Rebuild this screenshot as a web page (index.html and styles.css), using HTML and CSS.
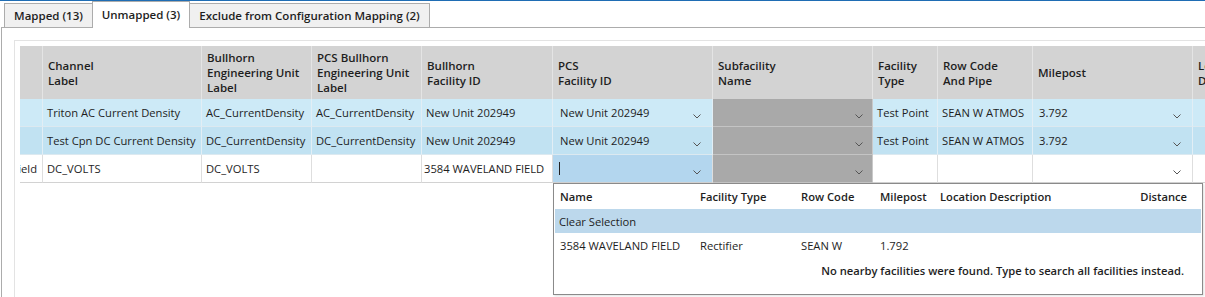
FILE: index.html
```html
<!DOCTYPE html>
<html lang="en">

<head>
    <meta charset="UTF-8">
    <title>Channel Mapping - Unmapped</title>
    <link rel="stylesheet" href="styles.css">
</head>

<body>
    <div class="topline"></div>

    <div class="tabs">
        <div class="tab tab-mapped">Mapped (13)</div>
        <div class="tab tab-unmapped active">Unmapped (3)</div>
        <div class="tab tab-exclude">Exclude from Configuration Mapping (2)</div>
    </div>

    <div class="panel">
        <div class="box">
            <div class="grid">
                <div class="row head">
                    <div class="cell"></div>
                    <div class="cell">Channel<br>Label</div>
                    <div class="cell">Bullhorn<br>Engineering Unit<br>Label</div>
                    <div class="cell">PCS Bullhorn<br>Engineering Unit<br>Label</div>
                    <div class="cell">Bullhorn<br>Facility ID</div>
                    <div class="cell">PCS<br>Facility ID</div>
                    <div class="cell">Subfacility<br>Name</div>
                    <div class="cell">Facility<br>Type</div>
                    <div class="cell">Row Code<br>And Pipe</div>
                    <div class="cell">Milepost</div>
                    <div class="cell">Location<br>Description</div>
                </div>

                <div class="row odd">
                    <div class="cell"></div>
                    <div class="cell">Triton AC Current Density</div>
                    <div class="cell">AC_CurrentDensity</div>
                    <div class="cell">AC_CurrentDensity</div>
                    <div class="cell">New Unit 202949</div>
                    <div class="cell combo"><span>New Unit 202949</span><svg class="chev" width="8" height="5" viewBox="0 0 8 5"><path d="M0.5 0.5 L4 4 L7.5 0.5" /></svg></div>
                    <div class="cell combo disabled"><span></span><svg class="chev" width="8" height="5" viewBox="0 0 8 5"><path d="M0.5 0.5 L4 4 L7.5 0.5" /></svg></div>
                    <div class="cell">Test Point</div>
                    <div class="cell">SEAN W ATMOS</div>
                    <div class="cell combo mp"><span>3.792</span><svg class="chev" width="8" height="5" viewBox="0 0 8 5"><path d="M0.5 0.5 L4 4 L7.5 0.5" /></svg></div>
                    <div class="cell"></div>
                </div>

                <div class="row even">
                    <div class="cell"></div>
                    <div class="cell">Test Cpn DC Current Density</div>
                    <div class="cell">DC_CurrentDensity</div>
                    <div class="cell">DC_CurrentDensity</div>
                    <div class="cell">New Unit 202949</div>
                    <div class="cell combo"><span>New Unit 202949</span><svg class="chev" width="8" height="5" viewBox="0 0 8 5"><path d="M0.5 0.5 L4 4 L7.5 0.5" /></svg></div>
                    <div class="cell combo disabled"><span></span><svg class="chev" width="8" height="5" viewBox="0 0 8 5"><path d="M0.5 0.5 L4 4 L7.5 0.5" /></svg></div>
                    <div class="cell">Test Point</div>
                    <div class="cell">SEAN W ATMOS</div>
                    <div class="cell combo mp"><span>3.792</span><svg class="chev" width="8" height="5" viewBox="0 0 8 5"><path d="M0.5 0.5 L4 4 L7.5 0.5" /></svg></div>
                    <div class="cell"></div>
                </div>

                <div class="row plain">
                    <div class="cell rowhead"><span>3584 Waveland Field</span></div>
                    <div class="cell">DC_VOLTS</div>
                    <div class="cell">DC_VOLTS</div>
                    <div class="cell"></div>
                    <div class="cell tight">3584 WAVELAND FIELD</div>
                    <div class="cell combo editing"><span class="caret"></span><svg class="chev" width="8" height="5" viewBox="0 0 8 5"><path d="M0.5 0.5 L4 4 L7.5 0.5" /></svg></div>
                    <div class="cell combo disabled"><span></span><svg class="chev" width="8" height="5" viewBox="0 0 8 5"><path d="M0.5 0.5 L4 4 L7.5 0.5" /></svg></div>
                    <div class="cell"></div>
                    <div class="cell"></div>
                    <div class="cell combo mp"><span></span><svg class="chev" width="8" height="5" viewBox="0 0 8 5"><path d="M0.5 0.5 L4 4 L7.5 0.5" /></svg></div>
                    <div class="cell"></div>
                </div>
            </div>

            <!-- facility picker popup for the PCS Facility ID editor -->
            <div class="dropdown">
                <div class="dd-row dd-head">
                    <div>Name</div>
                    <div>Facility Type</div>
                    <div>Row Code</div>
                    <div>Milepost</div>
                    <div>Location Description</div>
                    <div class="dist">Distance</div>
                </div>
                <div class="dd-row selected">
                    <div class="clear">Clear Selection</div>
                </div>
                <div class="dd-row">
                    <div>3584 WAVELAND FIELD</div>
                    <div>Rectifier</div>
                    <div>SEAN W</div>
                    <div>1.792</div>
                    <div></div>
                    <div class="dist"></div>
                </div>
                <div class="dd-note">No nearby facilities were found. Type to search all facilities instead.</div>
            </div>
        </div>
    </div>
</body>

</html>
```

FILE: styles.css
```css
* {
    box-sizing: border-box;
}

body {
    margin: 0;
    height: 297px;
    overflow: hidden;
    background: #fff;
    color: #1e1e1e;
    font-family: "Open Sans", "Noto Sans", sans-serif;
    font-size: 11.2px;
}

.topline {
    height: 1px;
    background: #1f6db4;
}

/* tab strip */
.tabs {
    display: flex;
    align-items: flex-end;
    height: 26px;
    padding-left: 4px;
    position: relative;
    z-index: 1;
}

.tab {
    height: 24px;
    border: 1px solid #acacac;
    border-bottom: none;
    background: #f0f0f0;
    font-weight: 600;
    font-size: 11.5px;
    display: flex;
    align-items: center;
    justify-content: center;
    white-space: nowrap;
}

.tab + .tab {
    margin-left: -1px;
}

.tab-mapped {
    width: 89px;
}

.tab-unmapped {
    width: 98px;
}

.tab-exclude {
    width: 241px;
}

.tab.active {
    height: 27px;
    margin-bottom: -1px;
    padding-bottom: 2px;
    background: #fff;
    position: relative;
    z-index: 2;
}

/* content */
.panel {
    margin-left: 1px;
    border-top: 1px solid #acacac;
    border-left: 1px solid #acacac;
    padding: 12px 0 0 12px;
    height: 300px;
    overflow: hidden;
}

.box {
    position: relative;
    width: 1400px;
    height: 400px;
    border: 1px solid #e3e3e3;
    padding: 5px;
}

.row {
    display: grid;
    grid-template-columns: 23px 159px 110px 110px 131px 160px 160px 65px 95px 160px 120px;
    height: 28px;
}

.cell {
    display: flex;
    align-items: center;
    padding-left: 4px;
    border-right: 1px solid #dedede;
    border-bottom: 1px solid #d6d6d6;
    white-space: nowrap;
    overflow: hidden;
}

.row.head {
    height: 53px;
    background: #d3d3d3;
    font-weight: 600;
    font-size: 11.5px;
    line-height: 15px;
}

.row.head .cell {
    border-right-color: #e4e4e4;
    border-bottom: none;
    padding-left: 5px;
}

.row.odd {
    background: #cdeaf7;
}

.row.even {
    background: #c1e2f2;
}

.row.odd .cell,
.row.even .cell {
    border-right-color: #e2eef5;
    border-bottom-color: #dce9f0;
}

.row.plain .cell {
    border-right-color: #dedede;
    border-bottom-color: #d2d2d2;
}

.cell.tight {
    padding-left: 2px;
}

.rowhead {
    justify-content: flex-end;
    padding-left: 0;
    padding-right: 5px;
}

/* combo box cells */
.combo {
    justify-content: space-between;
    padding-left: 7px;
}

.combo.mp {
    padding-left: 6px;
}

.combo .chev {
    align-self: flex-end;
    margin: 0 11px 7px 0;
    flex-shrink: 0;
}

.chev path {
    fill: none;
    stroke: #555;
    stroke-width: 1;
}

.row .combo.disabled {
    background: #a9a9a9;
    border-bottom-color: #c4c4c4;
    border-right-color: #c9c9c9;
}

.combo.disabled .chev {
    margin-right: 9px;
}

.row .combo.editing {
    background: #b3d6ee;
    padding-left: 6px;
}

.caret {
    width: 1px;
    height: 13px;
    background: #222;
}

/* facility picker popup */
.dropdown {
    position: absolute;
    left: 538px;
    top: 142px;
    width: 650px;
    height: 112px;
    background: #fff;
    border: 1px solid #8a8a8a;
    padding: 0 1px;
    box-shadow: 1px 1px 2px rgba(0, 0, 0, 0.12);
}

.dd-row {
    display: grid;
    grid-template-columns: 140px 101px 79px 60px 1fr 80px;
    align-items: center;
    height: 24px;
    padding-left: 5px;
    white-space: nowrap;
}

.dd-head {
    height: 25px;
    font-weight: 600;
}

.dd-row .dist {
    text-align: right;
    padding-right: 14px;
}

.dd-row.selected {
    background: #bcd8ec;
}

.dd-row .clear {
    grid-column: 1 / -1;
    margin-left: -1px;
}

.dd-note {
    height: 27px;
    display: flex;
    align-items: center;
    justify-content: flex-end;
    padding-right: 17px;
    font-weight: 600;
}
```
